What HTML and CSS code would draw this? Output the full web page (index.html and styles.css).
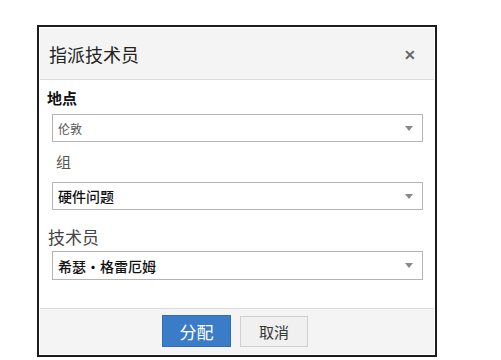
FILE: index.html
```html
<!DOCTYPE html>
<html lang="zh-CN">
<head>
    <meta charset="UTF-8">
    <meta name="viewport" content="width=device-width, initial-scale=1.0">
    <title>指派技术员</title>
    <link rel="stylesheet" href="styles.css">
</head>
<body>
    <div class="dialog">
        <div class="dialog-header">
            <h1>指派技术员</h1>
            <span class="close">&#x2715;</span>
        </div>

        <div class="dialog-body">
            <div class="label label-location">地点</div>
            <div class="select select-location">
                <span class="value">伦敦</span>
                <span class="arrow"></span>
            </div>

            <div class="label label-group">组</div>
            <div class="select select-group">
                <span class="value">硬件问题</span>
                <span class="arrow"></span>
            </div>

            <div class="label label-tech">技术员</div>
            <div class="select select-tech">
                <span class="value">希瑟·格雷厄姆</span>
                <span class="arrow"></span>
            </div>
        </div>

        <div class="dialog-footer">
            <button class="btn btn-primary">分配</button>
            <button class="btn btn-cancel">取消</button>
        </div>
    </div>
</body>
</html>
```

FILE: styles.css
```css
body {
    margin: 0;
    padding: 0;
    background-color: #ffffff;
    font-family: "Noto Sans CJK SC", "Noto Sans", sans-serif;
}

.dialog {
    width: 400px;
    margin: 25px 0 0 37px;
    border: 2px solid #1c1c1c;
    padding: 1px;
    box-sizing: border-box;
    background: white;
}

.dialog-header {
    display: flex;
    justify-content: space-between;
    align-items: center;
    height: 51px;
    padding: 0 18px 0 9px;
    background-color: #f4f4f4;
    border-bottom: 1px solid #dcdcdc;
}

.dialog-header h1 {
    margin: 0;
    font-size: 18px;
    font-weight: normal;
    color: #222;
}

.close {
    font-size: 14px;
    font-weight: bold;
    color: #666;
}

.dialog-body {
    padding: 8px 11px 28px 0;
}

.label {
    line-height: 20px;
}

.label-location {
    margin-left: 7px;
    font-size: 15px;
    font-weight: bold;
    color: #111;
}

.label-group {
    margin: 10px 0 0 16px;
    font-size: 15px;
    color: #555;
}

.label-tech {
    margin: 16px 0 0 8px;
    font-size: 17px;
    line-height: 22px;
    color: #444;
}

.select {
    display: flex;
    justify-content: space-between;
    align-items: center;
    height: 28px;
    margin-left: 12px;
    padding: 0 9px 0 5px;
    border: 1px solid #b4b4b4;
    box-sizing: border-box;
    background: white;
}

.select-location {
    margin-top: 6px;
}

.select-location .value {
    font-size: 12px;
    color: #555;
}

.select-group {
    margin-top: 10px;
}

.select-tech {
    margin-top: 3px;
    height: 29px;
}

.select-group .value,
.select-tech .value {
    font-size: 14px;
    font-weight: 500;
    color: #111;
}

.arrow {
    width: 0;
    height: 0;
    border-left: 4px solid transparent;
    border-right: 4px solid transparent;
    border-top: 5px solid #888;
}

.dialog-footer {
    display: flex;
    justify-content: center;
    align-items: flex-start;
    gap: 9px;
    height: 46px;
    padding: 6px 4px 0 0;
    box-sizing: border-box;
    background-color: #f4f4f4;
    border-top: 1px solid #dcdcdc;
}

.btn {
    font-family: "Noto Sans CJK SC", "Noto Sans", sans-serif;
    padding: 0;
    cursor: pointer;
}

.btn-primary {
    width: 69px;
    height: 32px;
    font-size: 17px;
    color: white;
    background-color: #3b7cc8;
    border: 1px solid #316db3;
}

.btn-cancel {
    width: 68px;
    height: 31px;
    margin-top: 1px;
    font-size: 15px;
    color: #333;
    background-color: #f0f0f0;
    border: 1px solid #cfcfcf;
}
```
